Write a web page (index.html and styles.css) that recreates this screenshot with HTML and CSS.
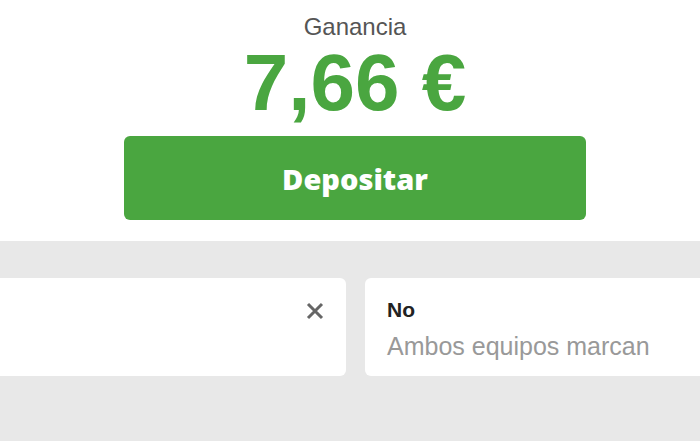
FILE: index.html
```html
<!DOCTYPE html>
<html lang="es">
<head>
    <meta charset="UTF-8">
    <meta name="viewport" content="width=device-width, initial-scale=1.0">
    <title>Ganancia</title>
    <link rel="stylesheet" href="styles.css">
</head>
<body>

    <!-- Winnings summary -->
    <div class="summary">
        <div class="label">Ganancia</div>
        <div class="amount">7,66 €</div>
        <button class="deposit-btn">Depositar</button>
    </div>

    <!-- Selections -->
    <div class="selections">
        <div class="cards">
            <div class="card">
                <span class="close">
                    <svg width="18" height="18" viewBox="0 0 18 18">
                        <path d="M2 2 L16 16 M16 2 L2 16" stroke="#666" stroke-width="3" fill="none"/>
                    </svg>
                </span>
            </div>
            <div class="card">
                <div class="pick">No</div>
                <div class="market">Ambos equipos marcan</div>
            </div>
        </div>
    </div>

</body>
</html>
```

FILE: styles.css
```css
html, body {
    margin: 0;
    height: 100%;
    overflow: hidden;
}

body {
    font-family: "Liberation Sans", Arial, sans-serif;
    background-color: #e8e8e8;
}

.summary {
    width: 710px;
    background-color: white;
    text-align: center;
    padding-top: 14px;
    padding-bottom: 21px;
}

.label {
    font-size: 24px;
    line-height: 26px;
    color: #555;
}

.amount {
    margin-top: 3px;
    font-size: 80px;
    font-weight: bold;
    line-height: 80px;
    color: #4aa640;
}

.deposit-btn {
    display: block;
    width: 462px;
    height: 84px;
    margin: 13px auto 0 124px;
    border: none;
    border-radius: 6px;
    background-color: #4aa640;
    color: white;
    font-family: "Open Sans", sans-serif;
    font-weight: 800;
    font-size: 29px;
    cursor: pointer;
}

.selections {
    padding-top: 37px;
}

.cards {
    display: grid;
    grid-template-columns: 370px 370px;
    gap: 19px;
    margin-left: -24px;
}

.card {
    position: relative;
    height: 98px;
    box-sizing: border-box;
    padding: 20px 22px;
    background-color: white;
    border-radius: 6px;
}

.close {
    position: absolute;
    top: 24px;
    right: 22px;
}

.pick {
    font-size: 21px;
    font-weight: bold;
    color: #222;
    line-height: 24px;
}

.market {
    margin-top: 10px;
    font-size: 25px;
    color: #999;
    line-height: 28px;
}
```
